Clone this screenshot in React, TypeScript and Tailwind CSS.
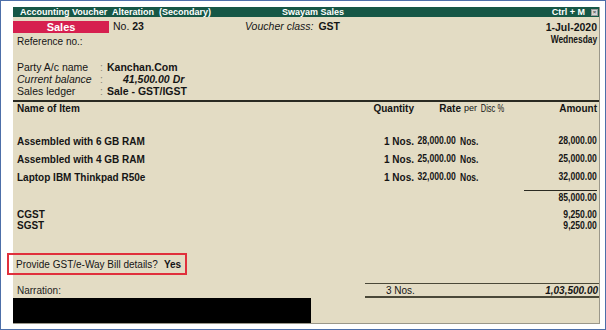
const items = [
  { name: "Assembled with 6 GB RAM", qty: "1 Nos.", rate: "28,000.00", per: "Nos.", amount: "28,000.00" },
  { name: "Assembled with 4 GB RAM", qty: "1 Nos.", rate: "25,000.00", per: "Nos.", amount: "25,000.00" },
  { name: "Laptop IBM Thinkpad R50e", qty: "1 Nos.", rate: "32,000.00", per: "Nos.", amount: "32,000.00" },
];

const taxes = [
  { name: "CGST", amount: "9,250.00" },
  { name: "SGST", amount: "9,250.00" },
];

// condensed number, squeezed toward the right edge
function Num({ children }: { children: React.ReactNode }) {
  return <span className="inline-block shrink-0 origin-right scale-x-[0.82] text-[10.5px]">{children}</span>;
}

export default function App() {
  return (
    <div
      className="w-[606px] h-[330px] border border-[#4d6fa9] bg-white pt-[6px] pl-[12px] pr-[5px] pb-[5px] text-[#151515]"
      style={{ fontFamily: "'Liberation Sans', Arial, sans-serif" }}
    >
      <div className="h-full flex flex-col bg-[#e3dcc4] border-r border-b border-[#9a978a]">
        {/* Title bar */}
        <div className="h-[10px] flex items-center bg-[#165746] text-white font-bold text-[9px] leading-none whitespace-nowrap">
          <span className="w-[269px] pl-[7px]">Accounting Voucher&nbsp; Alteration&nbsp; (Secondary)</span>
          <span>Swayam Sales</span>
          <span className="ml-auto mr-[6px]">Ctrl + M</span>
          <span className="w-[7px] h-[7px] mr-[1px] bg-[#d8d8d8] border border-[#9a9a9a] text-[#555] text-[6px] leading-none flex items-center justify-center">×</span>
        </div>

        {/* Voucher head */}
        <div className="flex mt-[4px]">
          <div className="flex-1 flex flex-col">
            <div className="h-[12px] flex items-center text-[10.5px]">
              <div className="w-[96px] h-full bg-[#d6204f] text-white font-bold text-[11px] flex items-center justify-center">Sales</div>
              <div className="w-[136px] pl-[4px]">
                No. <span className="font-bold">23</span>
              </div>
              <div>
                <span className="italic">Voucher class:</span> <span className="font-bold ml-[2px]">GST</span>
              </div>
            </div>
            <div className="h-[12px] mt-[2px] pl-[4px] text-[10px] flex items-center">Reference no.:</div>
          </div>
          <div className="flex flex-col items-end pr-[2px]">
            <div className="h-[12px] mt-[1px] font-bold text-[10.5px] flex items-center">1-Jul-2020</div>
            <div className="h-[12px] font-bold text-[10.5px] flex items-center justify-end">
              <span className="inline-block shrink-0 origin-right scale-x-[0.8]">Wednesday</span>
            </div>
          </div>
        </div>

        {/* Party details */}
        <div className="mt-[15px] pl-[4px] text-[10.5px] flex flex-col">
          <div className="h-[12px] flex items-center">
            <span className="w-[83px]">Party A/c name</span>
            <span className="w-[7px] text-[#8a8677]">:</span>
            <span className="font-bold">Kanchan.Com</span>
          </div>
          <div className="h-[12px] flex items-center italic">
            <span className="w-[83px]">Current balance</span>
            <span className="w-[7px] text-[#8a8677] not-italic">:</span>
            <span className="font-bold pl-[16px]">41,500.00 Dr</span>
          </div>
          <div className="h-[12px] flex items-center">
            <span className="w-[83px]">Sales ledger</span>
            <span className="w-[7px] text-[#8a8677]">:</span>
            <span className="font-bold">Sale - GST/IGST</span>
          </div>
        </div>

        {/* Table header */}
        <div className="mt-[2px] border-t-2 border-[#2a2a22] h-[15px] flex items-center font-bold text-[10px] whitespace-nowrap">
          <span className="flex-1 pl-[4px]">Name of Item</span>
          <span className="w-[60px] text-right">Quantity</span>
          <span className="w-[47px] text-right">Rate</span>
          <span className="w-[16px] text-right font-normal text-[9px]">per</span>
          <span className="w-[27px] flex justify-end font-normal text-[10px]">
            <span className="inline-block shrink-0 origin-right scale-x-[0.75]">Disc %</span>
          </span>
          <span className="w-[95px] text-right pr-[2px]">Amount</span>
        </div>

        {/* Items */}
        <div className="mt-[17px] flex flex-col font-bold text-[10px] whitespace-nowrap">
          {items.map((it) => (
            <div key={it.name} className="h-[18px] flex items-center">
              <span className="flex-1 pl-[4px]">{it.name}</span>
              <span className="w-[60px] text-right">{it.qty}</span>
              <span className="w-[42px] flex justify-end"><Num>{it.rate}</Num></span>
              <span className="w-[47px] pl-[4px] text-[10px]">
                <span className="inline-block origin-left scale-x-[0.85]">{it.per}</span>
              </span>
              <span className="w-[96px] flex justify-end pr-[2px]"><Num>{it.amount}</Num></span>
            </div>
          ))}
        </div>

        {/* Subtotal */}
        <div className="mt-[4px] flex justify-end pr-[2px]">
          <div className="w-[73px] h-[14px] border-t border-[#2a2a22] flex items-center justify-end font-bold">
            <Num>85,000.00</Num>
          </div>
        </div>

        {/* Taxes */}
        <div className="mt-[5px] flex flex-col font-bold text-[10px]">
          {taxes.map((t) => (
            <div key={t.name} className="h-[11px] flex items-center">
              <span className="flex-1 pl-[4px]">{t.name}</span>
              <span className="pr-[2px] flex justify-end"><Num>{t.amount}</Num></span>
            </div>
          ))}
        </div>

        {/* GST / e-Way bill prompt */}
        <div className="mt-[22px] -ml-[6px] w-[180px] h-[22px] border-2 border-[#e0303c] flex items-center pl-[7px] text-[10px] whitespace-nowrap">
          Provide GST/e-Way Bill details?
          <span className="font-bold ml-[6px]">Yes</span>
        </div>

        {/* Narration & totals */}
        <div className="mt-[8px] flex flex-1">
          <div className="w-[352px] flex flex-col">
            <div className="h-[15px] flex items-center pl-[4px] text-[10px] text-[#222]">Narration:</div>
            <div className="w-[298px] flex-1 bg-black" />
          </div>
          <div className="flex-1 self-start">
            <div className="h-[15px] border-t border-b-2 border-[#4a4838] flex items-center text-[10px]">
              <span className="pl-[21px]">3 Nos.</span>
              <span className="ml-auto font-bold italic pr-[1px]">1,03,500.00</span>
            </div>
          </div>
        </div>
      </div>
    </div>
  );
}
